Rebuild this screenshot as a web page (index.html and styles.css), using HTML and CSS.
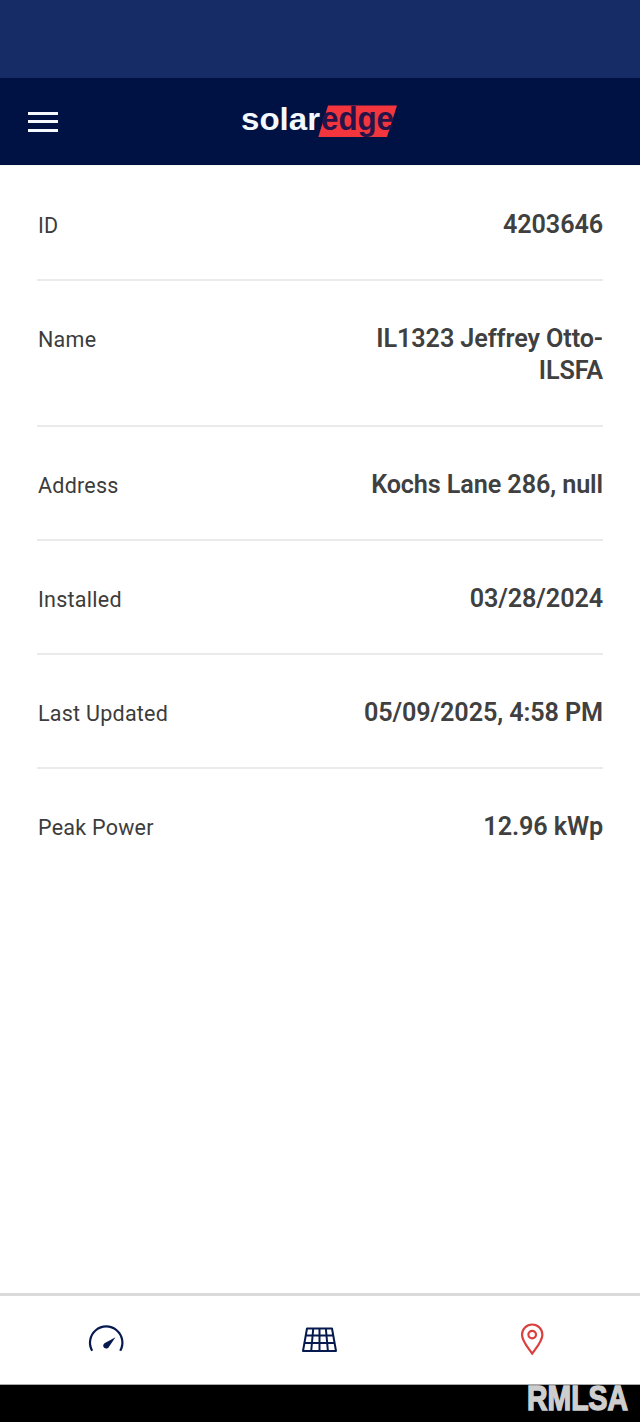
FILE: index.html
```html
<!DOCTYPE html>
<html lang="en">
<head>
<meta charset="utf-8">
<title>SolarEdge</title>
<link rel="stylesheet" href="styles.css">
</head>
<body>
<div class="app">
  <div class="status-bar"></div>
  <header class="header">
    <button class="menu" aria-label="Menu"><span></span><span></span><span></span></button>
    <svg class="logo" width="160" height="60" viewBox="0 -10 160 60">
      <path class="logo-flag" d="M88 3.500H157L147 35H78.300Z"/>
      <text class="logo-solar" x="1" y="28" textLength="79" lengthAdjust="spacingAndGlyphs">solar</text>
      <text class="logo-edge" x="81" y="28" textLength="73" lengthAdjust="spacingAndGlyphs">edge</text>
    </svg>
  </header>
  <main class="details">
    <div class="row"><span class="label">ID</span><span class="value">4203646</span></div>
    <div class="row"><span class="label">Name</span><span class="value">IL1323 Jeffrey Otto-<br>ILSFA</span></div>
    <div class="row"><span class="label">Address</span><span class="value">Kochs Lane 286, null</span></div>
    <div class="row"><span class="label">Installed</span><span class="value">03/28/2024</span></div>
    <div class="row"><span class="label">Last Updated</span><span class="value">05/09/2025, 4:58 PM</span></div>
    <div class="row"><span class="label">Peak Power</span><span class="value">12.96 kWp</span></div>
  </main>
  <nav class="tabs">
    <a class="tab"><svg width="40" height="40" viewBox="0 0 40 40">
      <path class="stroke" d="M5.700 31.300A16.200 16.200 0 1 1 33.700 31.300" transform="translate(-.5 -.5)"/>
      <path class="fill" d="M28.500 17.200L22 26.700A3 3 0 1 1 17.900 22.900Z"/>
    </svg></a>
    <a class="tab"><svg width="40" height="40" viewBox="0 0 40 40">
      <path class="stroke grid" d="M7 8.500H32L36 31H3Z M5.700 15.500H33.300 M4.300 23H34.900 M13.200 9L11.200 31 M19.500 9V31 M25.900 9L27.900 31"/>
    </svg></a>
    <a class="tab active"><svg width="40" height="40" viewBox="0 0 40 40">
      <path class="stroke" d="M19.200 33.800C16.700 29.500 9 21.500 9 14.700A10.200 10.200 0 0 1 29.400 14.700C29.400 21.500 21.700 29.500 19.200 33.800Z"/>
      <circle class="stroke" cx="19.200" cy="14.600" r="3.800"/>
    </svg></a>
  </nav>
  <footer class="system-bar">
    <svg class="watermark" width="106" height="47" viewBox="0 0 106 47"><text x="2" y="35" textLength="101" lengthAdjust="spacingAndGlyphs">RMLSA</text></svg>
  </footer>
</div>
</body>
</html>
```

FILE: styles.css
```css
* { box-sizing: border-box; }
body { margin: 0; background: #fff; font-family: Roboto, "Liberation Sans", sans-serif; }
.app { display: flex; flex-direction: column; width: 640px; height: 1422px; }
.status-bar { height: 78px; background: #152c66; }
.header { display: grid; grid-template-columns: 240px 160px 240px; align-items: center; height: 87px; background: #001143; }
.menu { display: flex; flex-direction: column; gap: 5.500px; width: 30px; margin: 0 0 0 28px; padding: 0; border: 0; background: none; }
.menu span { height: 3px; background: #f4faff; }
.logo { display: block; }
.logo-flag { fill: #f3353d; }
.logo text { font-family: "Liberation Sans", Arial, sans-serif; font-weight: 700; font-size: 32px; }
.logo .logo-solar { fill: #f4f8ff; }
.logo .logo-edge { fill: #26134a; font-size: 33px; }
.details { flex: 1; padding: 1px 37px 0; border-top: 1px solid #f6f6f6; }
.row { display: flex; justify-content: space-between; padding: 42px 0 37.200px; line-height: 32.600px; border-bottom: 2px solid #eaeaea; }
.row:last-child { border-bottom: 0; }
.label { padding: 1px 0 0 1px; height: 32.600px; font-size: 21.500px; letter-spacing: 0.25px; color: #3c3c3c; }
.value { font-size: 25.200px; font-weight: 600; letter-spacing: -0.100px; color: #404040; text-align: right; }
.tabs { display: grid; grid-template-columns: repeat(3, 1fr); place-items: center; height: 92px; border-top: 3px solid #dadada; border-bottom: 1px solid #aaa; color: #071a50; }
.tab { display: block; height: 40px; color: #071a50; }
.tab.active { color: #da403d; }
.stroke { fill: none; stroke: currentColor; stroke-width: 2.200; stroke-linejoin: round; }
.grid { stroke-width: 2; }
.fill { fill: currentColor; }
.system-bar { display: flex; justify-content: flex-end; height: 37px; padding-right: 9px; background: #000; }
.watermark { display: block; margin-top: -10px; }
.watermark text { font-family: "Liberation Sans", Arial, sans-serif; font-size: 35px; font-weight: 700; fill: #cecece; stroke: #cecece; stroke-width: 1.500; }
```
